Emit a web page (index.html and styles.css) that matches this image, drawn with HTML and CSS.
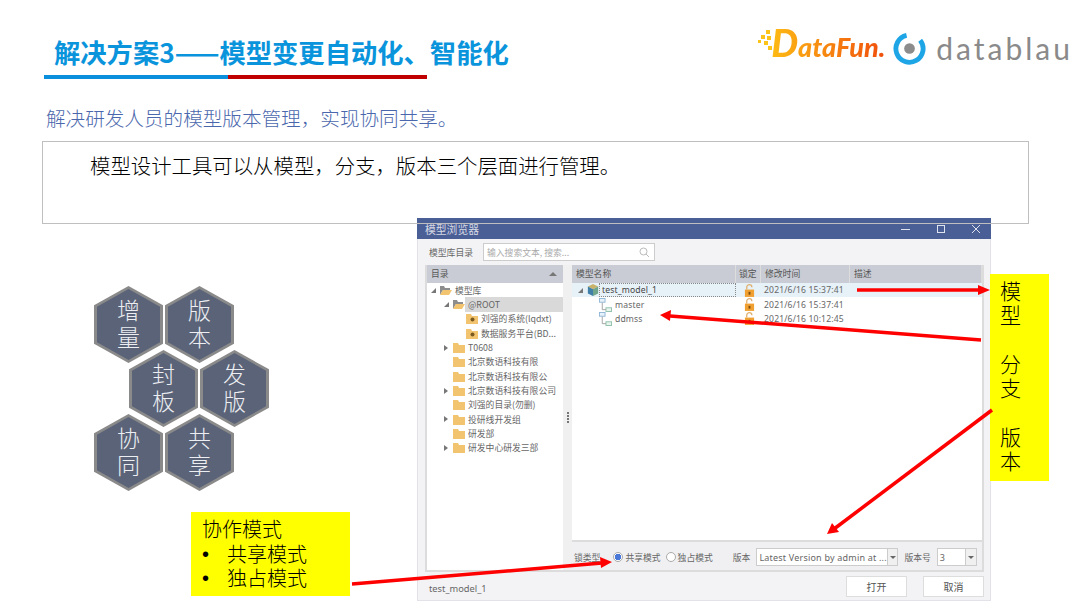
FILE: index.html
```html
<!DOCTYPE html>
<html>

<head>
	<meta charset="utf-8">
	<title>解决方案3——模型变更自动化、智能化</title>
	<link rel="stylesheet" href="styles.css">
</head>

<body>
	<svg class="defs" width="0" height="0">
		<symbol id="folder" viewBox="0 0 12 11">
			<path d="M0 1h5l1 2h6v8H0z" fill="#f2c46f" />
		</symbol>
		<symbol id="folder-open" viewBox="0 0 12 11">
			<path d="M0 1h4l1 2h5v2H3L0 10z" fill="#8d8d8d" />
			<path d="M3 5h9l-3 5H0z" fill="#f2c46f" />
		</symbol>
		<symbol id="folder-db" viewBox="0 0 12 11">
			<path d="M0 1h5l1 2h6v8H0z" fill="#f2c46f" />
			<circle cx="6.5" cy="6.5" r="2" fill="#7a5a20" />
		</symbol>
		<symbol id="lock" viewBox="0 0 12 14">
			<path d="M3 6V3.500a2.800 2.800 0 0 1 5.600 0" fill="none" stroke="#e0b070" stroke-width="1.400" />
			<rect x="1" y="6" width="10" height="8" fill="#f0a030" />
			<rect x="5" y="8.500" width="2" height="3" fill="#7a4a10" />
		</symbol>
		<symbol id="branch" viewBox="0 0 14 15">
			<rect x="0.500" y="0.500" width="6" height="4" fill="#e8f2fa" stroke="#8fb6d6" />
			<rect x="7.500" y="10.500" width="6" height="4" fill="#e8f5ee" stroke="#8fbfaa" />
			<path d="M3.500 5v7.500h4" fill="none" stroke="#a0a0a0" />
		</symbol>
	</svg>

	<div class="slide">
		<header class="top">
			<div class="heading">
				<h1>解决方案3——模型变更自动化、智能化</h1>
				<div class="rule"><span class="rule-blue"></span><span class="rule-red"></span></div>
			</div>
			<div class="logos">
				<svg class="df-dots" width="14" height="22" viewBox="0 0 14 22">
					<g fill="#fcc419">
						<rect x="8" y="1" width="4" height="4" />
						<rect x="3" y="6" width="4" height="4" />
						<rect x="9" y="7" width="4" height="4" />
						<rect x="0" y="11" width="3" height="3" />
						<rect x="6" y="12" width="4" height="4" />
						<rect x="10" y="17" width="4" height="4" />
					</g>
				</svg>
				<span class="df-text"><span class="df-d">D</span>ataFun.</span>
				<svg class="blau-mark" width="33" height="33" viewBox="0 0 34 34">
					<path d="M14 3.500A14 14 0 1 0 28 8.500" fill="none" stroke="#1ea5e6" stroke-width="5" />
					<circle cx="17" cy="17" r="5.500" fill="#8c8c8c" />
				</svg>
				<span class="blau-text">datablau</span>
			</div>
		</header>

		<p class="sub">解决研发人员的模型版本管理，实现协同共享。</p>

		<div class="box">
			<p>模型设计工具可以从模型，分支，版本三个层面进行管理。</p>
		</div>

		<div class="lower">
			<div class="left-col">
				<div class="hexes">
					<div class="hex-row">
						<div class="hex"><div class="hex-in">增<br>量</div></div>
						<div class="hex"><div class="hex-in">版<br>本</div></div>
					</div>
					<div class="hex-row shift">
						<div class="hex"><div class="hex-in">封<br>板</div></div>
						<div class="hex"><div class="hex-in">发<br>版</div></div>
					</div>
					<div class="hex-row">
						<div class="hex"><div class="hex-in">协<br>同</div></div>
						<div class="hex"><div class="hex-in">共<br>享</div></div>
					</div>
				</div>
				<div class="note-modes">
					<div>协作模式</div>
					<div class="mode"><span class="dot">•</span>共享模式</div>
					<div class="mode"><span class="dot">•</span>独占模式</div>
				</div>
			</div>

			<div class="win">
				<div class="win-title">
					<span>模型浏览器</span>
					<div class="win-btns">
						<svg width="10" height="10" viewBox="0 0 10 10"><path d="M0 5.500h9" stroke="#dfe3ee" /></svg>
						<svg width="10" height="10" viewBox="0 0 10 10"><rect x="1.500" y="1.500" width="7" height="7" fill="none" stroke="#dfe3ee" /></svg>
						<svg width="10" height="10" viewBox="0 0 10 10"><path d="M1 1l8 8M9 1l-8 8" stroke="#dfe3ee" /></svg>
					</div>
				</div>
				<div class="win-tools">
					<span>模型库目录</span>
					<div class="search">
						<span>输入搜索文本, 搜索...</span>
						<svg width="11" height="11" viewBox="0 0 11 11"><circle cx="4.500" cy="4.500" r="3.500" fill="none" stroke="#bbb" /><path d="M7 7l3 3" stroke="#bbb" /></svg>
					</div>
				</div>
				<div class="win-main">
					<div class="tree">
						<div class="col-head tree-head"><span>目录</span><i class="caret up"></i></div>
						<div class="tw l0"><i class="caret open"></i><svg class="ic"><use href="#folder-open" /></svg><span>模型库</span></div>
						<div class="tw l1 picked"><i class="caret open"></i><svg class="ic"><use href="#folder-open" /></svg><span>@ROOT</span></div>
						<div class="tw l2"><i class="caret none"></i><svg class="ic"><use href="#folder-db" /></svg><span>刘强的系统(lqdxt)</span></div>
						<div class="tw l2"><i class="caret none"></i><svg class="ic"><use href="#folder-db" /></svg><span>数据服务平台(BD...</span></div>
						<div class="tw l1"><i class="caret shut"></i><svg class="ic"><use href="#folder" /></svg><span>T0608</span></div>
						<div class="tw l1"><i class="caret none"></i><svg class="ic"><use href="#folder" /></svg><span>北京数语科技有限</span></div>
						<div class="tw l1"><i class="caret none"></i><svg class="ic"><use href="#folder" /></svg><span>北京数语科技有限公</span></div>
						<div class="tw l1"><i class="caret shut"></i><svg class="ic"><use href="#folder" /></svg><span>北京数语科技有限公司</span></div>
						<div class="tw l1"><i class="caret none"></i><svg class="ic"><use href="#folder" /></svg><span>刘强的目录(勿删)</span></div>
						<div class="tw l1"><i class="caret shut"></i><svg class="ic"><use href="#folder" /></svg><span>投研线开发组</span></div>
						<div class="tw l1"><i class="caret none"></i><svg class="ic"><use href="#folder" /></svg><span>研发部</span></div>
						<div class="tw l1"><i class="caret shut"></i><svg class="ic"><use href="#folder" /></svg><span>研发中心研发三部</span></div>
					</div>
					<div class="split"><i></i><i></i><i></i><i></i></div>
					<div class="models">
						<div class="list">
							<div class="grid col-head">
								<span>模型名称</span><span>锁定</span><span>修改时间</span><span>描述</span>
							</div>
							<div class="grid row sel">
								<div class="name first">
									<i class="caret open"></i>
									<svg width="12" height="14" viewBox="0 0 14 14">
										<path d="M7 0l6 3-6 3-6-3z" fill="#c9b26a" />
										<path d="M1 3l6 3v8l-6-3z" fill="#3f7fa8" />
										<path d="M13 3l-6 3v8l6-3z" fill="#6fa58a" />
									</svg>
									<span class="edit">test_model_1</span>
								</div>
								<svg class="lock" width="11" height="13"><use href="#lock" /></svg>
								<span>2021/6/16 15:37:41</span><span></span>
							</div>
							<div class="grid row">
								<div class="name"><svg width="13" height="14"><use href="#branch" /></svg><span>master</span></div>
								<svg class="lock" width="11" height="13"><use href="#lock" /></svg>
								<span>2021/6/16 15:37:41</span><span></span>
							</div>
							<div class="grid row">
								<div class="name"><svg width="13" height="14"><use href="#branch" /></svg><span>ddmss</span></div>
								<svg class="lock" width="11" height="13"><use href="#lock" /></svg>
								<span>2021/6/16 10:12:45</span><span></span>
							</div>
						</div>
						<div class="strip">
							<span class="lbl-lock">锁类型</span>
							<i class="radio on"></i><span class="lbl-share">共享模式</span>
							<i class="radio"></i><span class="lbl-own">独占模式</span>
							<span class="lbl-ver">版本</span>
							<div class="combo wide"><span>Latest Version by admin at ...</span><b><i class="caret down"></i></b></div>
							<span class="lbl-num">版本号</span>
							<div class="combo small"><span>3</span><b><i class="caret down"></i></b></div>
						</div>
					</div>
				</div>
				<div class="win-foot">
					<span class="foot-name">test_model_1</span>
					<button class="btn">打开</button>
					<button class="btn cancel">取消</button>
				</div>
			</div>

			<div class="note-levels">模<br>型<br><br>分<br>支<br><br>版<br>本</div>
		</div>

		<svg class="arrows" width="1080" height="608" viewBox="0 0 1080 608">
			<g stroke="#f00" stroke-width="3.500">
				<line x1="857" y1="290" x2="980" y2="290" />
				<line x1="981" y1="340" x2="670" y2="316" />
				<line x1="992" y1="410" x2="834" y2="529" />
				<line x1="352" y1="584" x2="602" y2="563" />
			</g>
			<g fill="#f00">
				<polygon points="990,290 978,285 978,295" />
				<polygon points="660,315 671,310 670,321" />
				<polygon points="827,534 832,523 839,532" />
				<polygon points="612,562 600,557 601,568" />
			</g>
		</svg>
	</div>
</body>

</html>
```

FILE: styles.css
```css
* {
	box-sizing: border-box;
}

body {
	margin: 0;
	background: #fff;
	font-family: "Noto Sans CJK SC", "Noto Sans", sans-serif;
	color: #000;
}

p,
h1 {
	margin: 0;
}

i {
	display: block;
}

.defs {
	position: absolute;
}

.slide {
	position: relative;
	width: 1080px;
	height: 608px;
	overflow: hidden;
}

/* header */
.top {
	display: flex;
	justify-content: space-between;
	height: 79px;
	padding: 0 7px 0 44px;
}

.heading {
	padding-top: 33px;
}

h1 {
	height: 42px;
	padding-left: 10px;
	font-size: 26.300px;
	line-height: 38px;
	font-weight: 700;
	color: #0a94dc;
	white-space: nowrap;
}

.rule {
	display: flex;
	height: 4px;
	width: 383px;
}

.rule-blue {
	width: 184px;
	background: #0a8fdc;
}

.rule-red {
	flex: 1;
	background: #c00000;
}

.logos {
	display: flex;
	align-items: flex-start;
	padding-top: 27px;
}

.df-dots {
	margin-top: 2px;
}

.df-text {
	margin-left: -1px;
	font-family: Lato, sans-serif;
	font-style: italic;
	font-weight: 900;
	font-size: 27px;
	line-height: 30px;
	background: linear-gradient(90deg, #fdbb14, #f04e0c);
	-webkit-background-clip: text;
	background-clip: text;
	color: transparent;
}

.df-d {
	font-size: 38px;
	line-height: 30px;
}

.blau-mark {
	margin: 5px 0 0 8px;
}

.blau-text {
	margin: 1px 0 0 10px;
	font-family: Lato, sans-serif;
	font-size: 30px;
	line-height: 40px;
	letter-spacing: 3px;
	color: #8a8a8a;
}

.sub {
	margin-top: 25px;
	padding-left: 46px;
	font-size: 19.600px;
	line-height: 27px;
	font-weight: 300;
	color: #4a67ad;
}

.box {
	position: relative;
	z-index: 2;
	width: 987px;
	height: 83px;
	margin: 10px 0 0 42px;
	padding: 8px 0 0 47px;
	border: 1px solid #bfbfbf;
	font-size: 20.400px;
	line-height: 30px;
	font-weight: 300;
}

.lower {
	display: flex;
	margin-top: -6px;
}

.left-col {
	width: 417px;
}

/* hexagons */
.hexes {
	margin: 68px 0 0 94px;
}

.hex-row {
	display: flex;
	gap: 2px;
}

.hex-row + .hex-row {
	margin-top: -13px;
}

.hex-row.shift {
	margin-left: 35px;
}

.hex {
	width: 69px;
	height: 77px;
	padding: 3px;
	background: #8a8a8a;
	clip-path: polygon(50% 0, 100% 25%, 100% 75%, 50% 100%, 0 75%, 0 25%);
}

.hex-in {
	height: 100%;
	padding-top: 7px;
	background: #5a6378;
	clip-path: polygon(50% 0, 100% 25%, 100% 75%, 50% 100%, 0 75%, 0 25%);
	text-align: center;
	font-size: 23px;
	line-height: 27px;
	font-weight: 300;
	color: #eceef2;
}

.note-modes {
	width: 159px;
	height: 84px;
	margin: 21px 0 0 191px;
	padding: 5px 0 0 11px;
	background: #ff0;
	font-size: 20px;
	line-height: 24.500px;
	font-weight: 300;
}

.mode {
	display: flex;
}

.dot {
	width: 25px;
	font-family: "Liberation Sans", sans-serif;
	font-weight: 400;
}

.note-levels {
	width: 59px;
	height: 207px;
	margin: 56px 0 0 -1px;
	padding: 4px 0 0 10px;
	background: #ff0;
	font-size: 21px;
	line-height: 24.300px;
	font-weight: 300;
	position: relative;
}

/* model browser window */
.win {
	display: flex;
	flex-direction: column;
	width: 574px;
	height: 383px;
	background: #f3f3f5;
	border: 1px solid #e2e2e8;
	border-top: 0;
	font-size: 8.800px;
	color: #666;
	white-space: nowrap;
}

.win-title {
	display: flex;
	align-items: center;
	justify-content: space-between;
	height: 21px;
	margin: 0 -1px;
	padding: 0 10px 0 8px;
	background: #4a5f96;
	font-size: 10.800px;
	color: #d5d8e4;
}

.win-btns {
	display: flex;
	gap: 25px;
}

.win-tools {
	display: flex;
	align-items: center;
	gap: 10px;
	height: 26px;
	padding-left: 11px;
}

.search {
	display: flex;
	align-items: center;
	justify-content: space-between;
	width: 172px;
	height: 18px;
	padding: 0 4px 0 3px;
	background: #fff;
	border: 1px solid #ccc;
	color: #aaa;
}

.win-main {
	display: grid;
	grid-template-columns: 138px 9px 412px;
	height: 307px;
	margin-left: 7px;
	width: 559px;
	border-bottom: 2px solid #dcdcdc;
}

.col-head {
	height: 18px;
	line-height: 18px;
	background: #c9ccd4;
	color: #555;
}

.tree {
	background: #fff;
	border-left: 2px solid #dcdcdc;
}

.tree-head {
	display: flex;
	align-items: center;
	justify-content: space-between;
	padding: 0 6px 0 4px;
}

.tw {
	display: flex;
	align-items: center;
	height: 14.350px;
}

.tw span {
	margin-left: 3px;
}

.l0 {
	padding-left: 4px;
}

.l1 {
	padding-left: 17px;
}

.l2 {
	padding-left: 30px;
}

.tw .ic {
	width: 12px;
	height: 11px;
}

.picked {
	background: linear-gradient(90deg, #fff 38px, #d9d9d9 38px);
}

/* little triangles, drawn from borders */
.caret {
	flex: none;
	width: 0;
	height: 0;
	border-style: solid;
	border-color: transparent;
}

.caret.open {
	border-width: 0 0 5px 5px;
	border-bottom-color: #777;
	margin-right: 4px;
}

.caret.shut {
	border-width: 3px 0 3px 4px;
	border-left-color: #777;
	margin-right: 5px;
}

.caret.none {
	border-width: 0;
	width: 9px;
}

.caret.up {
	border-width: 0 4px 4px;
	border-bottom-color: #777;
}

.caret.down {
	border-width: 3px 3px 0;
	border-top-color: #666;
}

.split {
	display: flex;
	flex-direction: column;
	align-items: center;
	justify-content: center;
	gap: 1px;
	background: #f0f0f0;
}

.split i {
	width: 2px;
	height: 2px;
	background: #777;
}

.models {
	display: flex;
	flex-direction: column;
	border-right: 2px solid #dcdcdc;
}

.list {
	flex: 1;
	background: #fff;
	border-bottom: 2px solid #dcdcdc;
}

.grid {
	display: grid;
	grid-template-columns: 164px 25px 89px 1fr;
	align-items: center;
}

.col-head.grid span {
	padding-left: 4px;
	border-right: 1px solid #ddd;
	height: 18px;
}

.col-head.grid span:nth-child(2) {
	padding-left: 3px;
}

.row {
	height: 14.350px;
	font-family: "Noto Sans", sans-serif;
	font-size: 8.600px;
	letter-spacing: 0.150px;
}

.row > span {
	padding-left: 3px;
}

.sel {
	background: #e6f1f8;
}

.name {
	display: flex;
	align-items: center;
	gap: 3px;
	padding-left: 27px;
}

.name.first {
	padding-left: 6px;
	gap: 0;
}

.edit {
	width: 137px;
	height: 14px;
	line-height: 13px;
	padding-left: 2px;
	border: 1px dotted #888;
	color: #444;
}

.lock {
	margin-left: 8px;
}

.strip {
	display: flex;
	align-items: center;
	flex: none;
	height: 28px;
	padding: 2px 0 0 2px;
	background: #f0f0f2;
}

.radio {
	flex: none;
	width: 10px;
	height: 10px;
	border: 1px solid #aaa;
	border-radius: 50%;
	background: #fff;
}

.radio.on {
	margin-left: 13px;
	background: radial-gradient(circle, #4a78d8 3px, #fff 3.500px);
}

.lbl-share {
	margin: 0 5px 0 2px;
}

.lbl-own {
	margin: 0 20px 0 2px;
}

.lbl-ver {
	margin-right: 6px;
}

.combo {
	display: flex;
	flex: none;
	align-items: center;
	justify-content: space-between;
	height: 18px;
	background: #fff;
	border: 1px solid #ccc;
	font-family: "Noto Sans", sans-serif;
	font-size: 9px;
	letter-spacing: 0.200px;
	padding-left: 2px;
}

.combo b {
	display: flex;
	align-items: center;
	justify-content: center;
	width: 11px;
	height: 100%;
	background: #f0f0f0;
	border-left: 1px solid #ccc;
}

.combo.wide {
	width: 142px;
}

.combo.small {
	width: 40px;
}

.lbl-num {
	margin: 0 6px;
}

.win-foot {
	display: flex;
	align-items: center;
	flex: 1;
	padding: 0 6px 0 11px;
}

.foot-name {
	flex: 1;
	font-family: "Noto Sans", sans-serif;
	font-size: 9.300px;
	margin-top: 4px;
}

.btn {
	width: 61px;
	height: 21px;
	margin-left: 16px;
	padding: 0;
	background: #fff;
	border: 1px solid #ddd;
	font: inherit;
	font-size: 10px;
	color: #555;
}

/* annotation arrows lie over everything */
.arrows {
	position: absolute;
	left: 0;
	top: 0;
	z-index: 3;
}
```
